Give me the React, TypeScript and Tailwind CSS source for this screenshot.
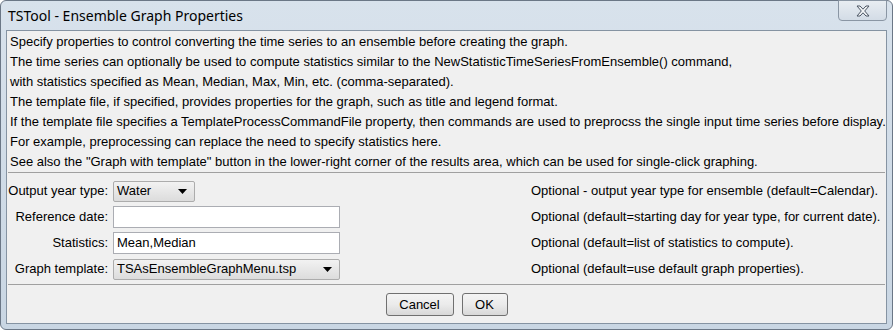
const intro = [
  "Specify properties to control converting the time series to an ensemble before creating the graph.",
  "The time series can optionally be used to compute statistics similar to the NewStatisticTimeSeriesFromEnsemble() command,",
  "with statistics specified as Mean, Median, Max, Min, etc. (comma-separated).",
  "The template file, if specified, provides properties for the graph, such as title and legend format.",
  "If the template file specifies a TemplateProcessCommandFile property, then commands are used to preprocss the single input time series before display.",
  "For example, preprocessing can replace the need to specify statistics here.",
  'See also the "Graph with template" button in the lower-right corner of the results area, which can be used for single-click graphing.',
];

function Combo({ value, width }: { value: string; width: string }) {
  return (
    <div
      className={`${width} h-[21px] flex items-center justify-between pl-[3px] pr-[7px] border border-[#acacac] rounded-[2px] bg-gradient-to-b from-[#f2f2f2] to-[#dcdcdc]`}
    >
      <span>{value}</span>
      <svg width="9" height="5" viewBox="0 0 9 5">
        <path d="M0 0H9L4.5 5Z" fill="#000" />
      </svg>
    </div>
  );
}

function TextField({ value }: { value: string }) {
  return (
    <div className="w-[227px] h-[22px] flex items-center px-[3px] border border-[#abadb3] bg-white">
      {value}
    </div>
  );
}

function Button({ label, width }: { label: string; width: string }) {
  return (
    <div
      className={`${width} h-[23px] flex items-center justify-center border border-[#707070] rounded-[3px] bg-gradient-to-b from-[#f4f4f4] via-[#ebebeb] to-[#d8d8d8]`}
    >
      {label}
    </div>
  );
}

export default function App() {
  const rows: { label: string; field: React.ReactNode; note: string }[] = [
    {
      label: "Output year type:",
      field: <Combo value="Water" width="w-[82px]" />,
      note: "Optional - output year type for ensemble (default=Calendar).",
    },
    {
      label: "Reference date:",
      field: <TextField value="" />,
      note: "Optional (default=starting day for year type, for current date).",
    },
    {
      label: "Statistics:",
      field: <TextField value="Mean,Median" />,
      note: "Optional (default=list of statistics to compute).",
    },
    {
      label: "Graph template:",
      field: <Combo value="TSAsEnsembleGraphMenu.tsp" width="w-[227px]" />,
      note: "Optional (default=use default graph properties).",
    },
  ];

  return (
    <div className="w-[895px] h-[331px] bg-white overflow-hidden">
      <div className="w-[893px] h-[330px] rounded-[6px] border border-[#6b7786] bg-gradient-to-b from-[#d8e2ec] to-[#c9d6e3] flex flex-col px-[5px] pb-[5px] relative">
        <div className="h-[29px] flex items-center pl-[2px] text-[14px] text-black font-['Noto_Sans',sans-serif]">
          TSTool - Ensemble Graph Properties
        </div>
        <div className="absolute right-[5px] top-[-1px] w-[49px] h-[21px] rounded-b-[4px] border border-[#8a96a4] bg-gradient-to-b from-[#e8edf2] to-[#d3dce6] flex items-center justify-center">
          <svg width="16" height="12" viewBox="0 0 16 12">
            <path
              d="M2 1H5L8 4.2L11 1H14L9.7 6L14 11H11L8 7.8L5 11H2L6.3 6Z"
              fill="#f4f6f8"
              stroke="#4a5563"
              strokeWidth="1"
              strokeLinejoin="round"
            />
          </svg>
        </div>
        <div className="flex-1 border border-[#8593a2] bg-[#f0f0f0] text-[13px] text-black font-['Liberation_Sans',sans-serif] flex flex-col">
          <div className="flex flex-col pl-[3px] pt-[1px]">
            {intro.map((line) => (
              <div key={line} className="h-[20px] leading-[20px] whitespace-nowrap">
                {line}
              </div>
            ))}
          </div>
          <div className="mx-[1px] border-t border-[#a0a0a0]" />
          <div className="grid grid-cols-[101px_227px_1fr] gap-x-[5px] gap-y-[4px] pt-[7px] pb-[4px] items-center">
            {rows.map((r) => (
              <div key={r.label} className="contents">
                <div className="text-right whitespace-nowrap">{r.label}</div>
                <div className="h-[22px] flex items-center">{r.field}</div>
                <div className="pl-[186px] whitespace-nowrap">{r.note}</div>
              </div>
            ))}
          </div>
          <div className="mx-[1px] border-t border-[#a0a0a0]" />
          <div className="flex justify-center gap-[8px] pt-[8px]">
            <Button label="Cancel" width="w-[68px]" />
            <Button label="OK" width="w-[46px]" />
          </div>
        </div>
      </div>
    </div>
  );
}
